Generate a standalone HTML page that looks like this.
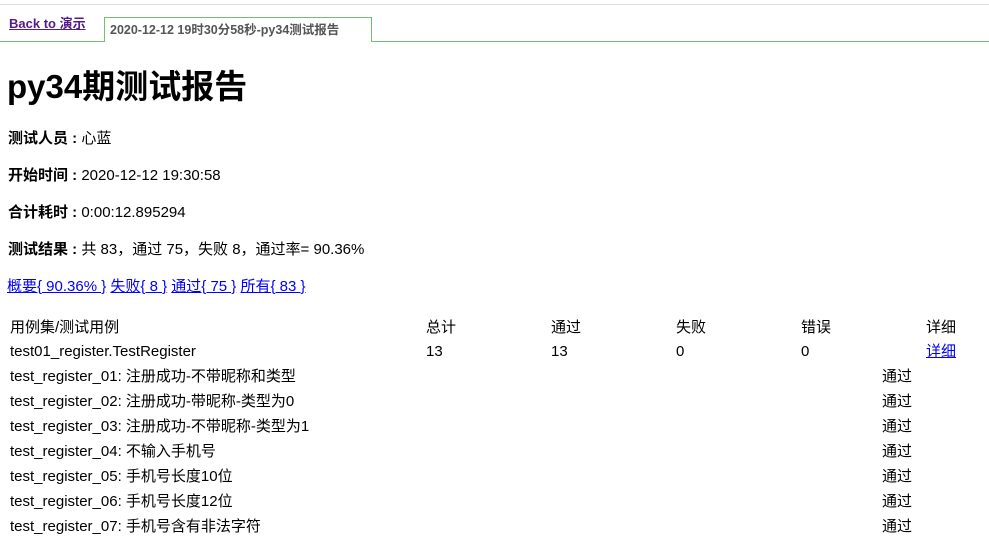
<!DOCTYPE html>
<html><head><meta charset="utf-8"><style>
body{margin:0;width:989px;height:527px;overflow:hidden;background:#fff;font-family:"Liberation Sans","Noto Sans CJK SC",sans-serif;font-size:15px;color:#000;position:relative}
.a{position:absolute;white-space:nowrap;line-height:20px}
a{color:#00f;text-decoration:underline}
b{font-weight:bold}
</style></head><body>
<div style="position:absolute;left:0;top:4px;width:989px;height:1px;background:#ddd"></div>
<div style="position:absolute;left:0;top:41px;width:989px;height:1px;background:#70c070"></div>
<div class="a" style="left:9px;top:14px;font-size:13px;font-weight:bold"><a style="color:#551a8b">Back to 演示</a></div>
<div style="position:absolute;left:104px;top:17px;width:268px;height:25px;border:1px solid #70c070;border-bottom:none;background:#fff;box-sizing:border-box"></div>
<div class="a" style="left:110px;top:20px;font-size:12.5px;font-weight:bold;color:#555">2020-12-12 19时30分58秒-py34测试报告</div>
<div class="a" style="left:7px;top:65px;font-size:33px;font-weight:bold;line-height:44px">py34期测试报告</div>
<div class="a" style="left:8px;top:129px"><b>测试人员 : </b>心蓝</div>
<div class="a" style="left:8px;top:166px"><b>开始时间 : </b>2020-12-12 19:30:58</div>
<div class="a" style="left:8px;top:203px"><b>合计耗时 : </b>0:00:12.895294</div>
<div class="a" style="left:8px;top:240px"><b>测试结果 : </b>共 83，通过 75，失败 8，通过率= 90.36%</div>
<div class="a" style="left:7px;top:277px"><a>概要{ 90.36% }</a> <a>失败{ 8 }</a> <a>通过{ 75 }</a> <a>所有{ 83 }</a></div>
<div class="a" style="left:10px;top:318px">用例集/测试用例</div>
<div class="a" style="left:426px;top:318px">总计</div>
<div class="a" style="left:551px;top:318px">通过</div>
<div class="a" style="left:676px;top:318px">失败</div>
<div class="a" style="left:801px;top:318px">错误</div>
<div class="a" style="left:926px;top:318px">详细</div>
<div class="a" style="left:10px;top:342px">test01_register.TestRegister</div>
<div class="a" style="left:426px;top:342px">13</div>
<div class="a" style="left:551px;top:342px">13</div>
<div class="a" style="left:676px;top:342px">0</div>
<div class="a" style="left:801px;top:342px">0</div>
<div class="a" style="left:926px;top:342px"><a>详细</a></div>
<div class="a" style="left:10px;top:367px">test_register_01: 注册成功-不带昵称和类型</div>
<div class="a" style="left:10px;top:392px">test_register_02: 注册成功-带昵称-类型为0</div>
<div class="a" style="left:10px;top:417px">test_register_03: 注册成功-不带昵称-类型为1</div>
<div class="a" style="left:10px;top:442px">test_register_04: 不输入手机号</div>
<div class="a" style="left:10px;top:467px">test_register_05: 手机号长度10位</div>
<div class="a" style="left:10px;top:492px">test_register_06: 手机号长度12位</div>
<div class="a" style="left:10px;top:517px">test_register_07: 手机号含有非法字符</div>
<div class="a" style="left:882px;top:367px">通过</div>
<div class="a" style="left:882px;top:392px">通过</div>
<div class="a" style="left:882px;top:417px">通过</div>
<div class="a" style="left:882px;top:442px">通过</div>
<div class="a" style="left:882px;top:467px">通过</div>
<div class="a" style="left:882px;top:492px">通过</div>
<div class="a" style="left:882px;top:517px">通过</div>
</body></html>
